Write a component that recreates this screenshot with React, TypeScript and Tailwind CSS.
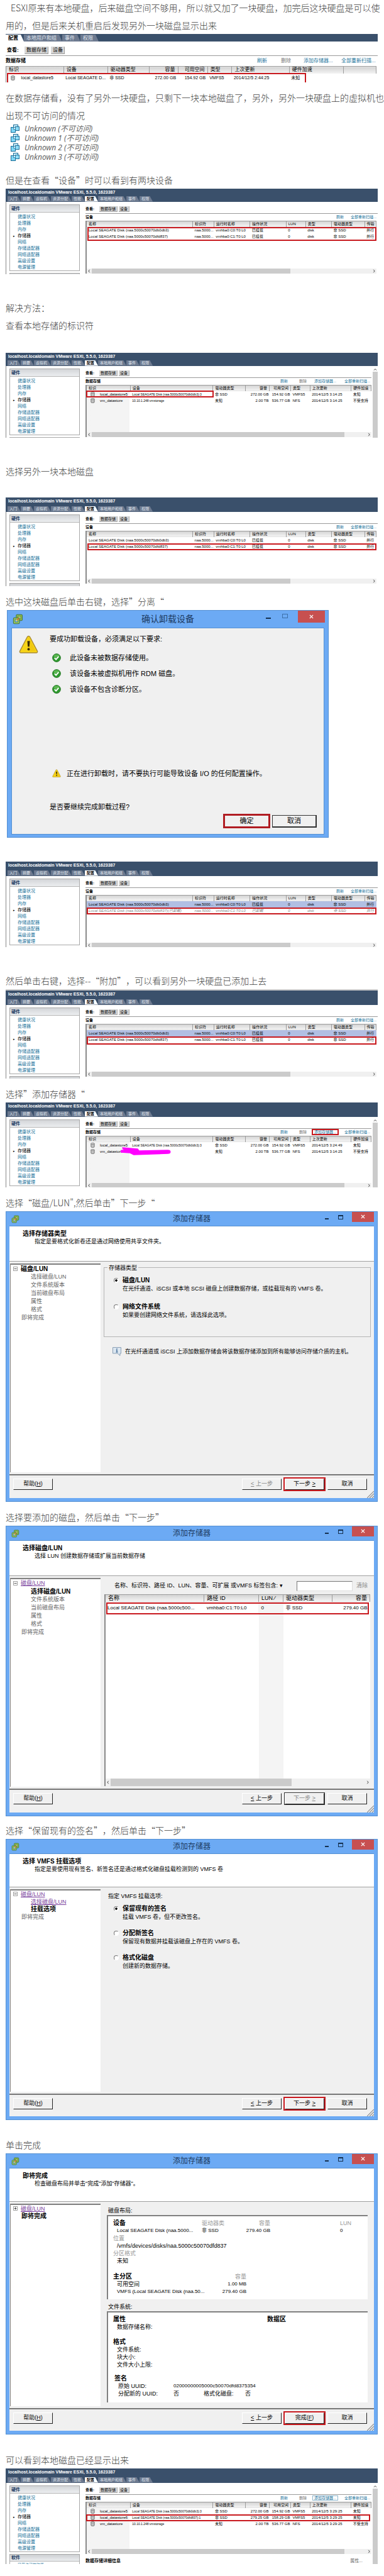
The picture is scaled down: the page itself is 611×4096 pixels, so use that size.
import { useState } from "react";
import type { ReactNode } from "react";

const ALL_TABS = ["入门", "摘要", "虚拟机", "资源分配", "性能", "配置", "本地用户和组", "事件", "权限"];
const NAV = ["健康状况", "处理器", "内存", "存储器", "网络", "存储适配器", "网络适配器", "高级设置", "电源管理"];

/* ---------- icons ---------- */

function VmIcon() {
  return (
    <svg viewBox="0 0 14 13" className="h-[13px] w-[14px] shrink-0" aria-hidden="true">
      <rect x="4.5" y="0.5" width="7" height="7" fill="#c9eefc" stroke="#1b6d97" />
      <rect x="7.5" y="3.5" width="6" height="6" fill="#8fdcf7" stroke="#1b6d97" />
      <rect x="0.5" y="4.5" width="7" height="8" fill="#7fd6f5" stroke="#1b6d97" />
      <rect x="4.5" y="4.5" width="3" height="3" fill="#e8faff" stroke="#1b6d97" strokeWidth="0.7" />
    </svg>
  );
}

function DiskIcon() {
  return (
    <svg viewBox="0 0 8 9" className="mx-auto h-[8px] w-[7px]" aria-hidden="true">
      <path d="M1 1.5v6c0 1.2 6 1.2 6 0v-6" fill="#d5d5d5" stroke="#555" strokeWidth="0.9" />
      <ellipse cx="4" cy="1.6" rx="3" ry="1.1" fill="#f4f4f4" stroke="#555" strokeWidth="0.9" />
      <path d="M3 3.5v4M5.4 3.5v4" stroke="#888" strokeWidth="0.6" />
    </svg>
  );
}

function ClientIcon({ className }: { className: string }) {
  return (
    <svg viewBox="0 0 16 16" className={className} aria-hidden="true">
      <rect x="5.5" y="1.2" width="9" height="9" rx="1.5" fill="#8dbb4d" stroke="#47763a" />
      <rect x="8" y="3.6" width="4.2" height="4" fill="#b9cf7c" stroke="#5c8c3a" strokeWidth="0.8" />
      <rect x="1.3" y="5.8" width="9" height="9" rx="1.5" fill="#9cc862" stroke="#47763a" />
      <rect x="3.6" y="8.2" width="4.4" height="4.2" fill="#6caaf4" stroke="#5c8c3a" strokeWidth="0.8" />
      <path d="M6 10l3.8-3.8" stroke="#d8662d" strokeWidth="1.6" />
      <circle cx="6.2" cy="9.6" r="1.2" fill="#f3d04e" />
    </svg>
  );
}

function WarningIcon({ className }: { className: string }) {
  return (
    <svg viewBox="0 0 32 30" className={className} aria-hidden="true">
      <path d="M16 1.5c1 0 1.700.5 2.200 1.400L30.300 26c.8 1.600 0 3-1.800 3H3.500c-1.800 0-2.600-1.400-1.800-3L13.800 2.900C14.300 2 15 1.500 16 1.500z" fill="#f7d417" stroke="#a98a35" strokeWidth="1.400" />
      <path d="M16 4L27.500 26H16z" fill="#e9bb0c" opacity="0.500" />
      <path d="M13.900 9.500h4.200l-.8 9.500h-2.600z" fill="#3a2c05" />
      <circle cx="16" cy="23" r="2" fill="#3a2c05" />
    </svg>
  );
}

function CheckIcon() {
  return (
    <svg viewBox="0 0 16 16" className="h-[14px] w-[14px] shrink-0" aria-hidden="true">
      <circle cx="8" cy="8" r="7.300" fill="#2f9a2f" stroke="#237323" />
      <ellipse cx="8" cy="4.600" rx="5" ry="3" fill="#7ccb6a" opacity="0.600" />
      <path d="M4.300 8.200l2.700 2.900 4.800-5.500" fill="none" stroke="#fff" strokeWidth="2.100" />
    </svg>
  );
}

function InfoIcon() {
  return (
    <svg viewBox="0 0 14 14" className="h-[14px] w-[14px] shrink-0" aria-hidden="true">
      <path d="M.5.5h13v9.500h-1.500v3.500l-4-3.500H.5z" fill="#dbe6f0" stroke="#8ba0b5" />
      <path d="M7 2v1.400M5.800 4.500H7v3.500M5.500 8h3" stroke="#2f5d8c" strokeWidth="1.200" fill="none" />
    </svg>
  );
}

function Grip() {
  return (
    <svg viewBox="0 0 11 11" className="h-[11px] w-[11px] shrink-0 self-end" aria-hidden="true">
      <path d="M0 11L11 0M4 11l7-7M8 11l3-3" stroke="#8c8c8c" strokeWidth="1.200" />
    </svg>
  );
}

/* ---------- vSphere client panels ---------- */

function Tabs({ names, large }: { names: string[]; large?: boolean }) {
  return (
    <div className={large ? "flex pt-px" : "flex pl-[3px]"} role="tablist">
      {names.map((name) => {
        const active = name === "配置";
        return (
          <button
            key={name}
            type="button"
            role="tab"
            aria-selected={active}
            className={
              (large ? "h-[11px] pr-[9px] pl-[4px] text-[8px] leading-[11px] " : "h-[9px] pr-[6px] pl-[3px] text-[6px] leading-[9px] ") +
              "whitespace-nowrap [clip-path:polygon(0_0,calc(100%-5px)_0,100%_100%,0_100%)] " +
              (active ? "bg-white font-bold text-black" : "bg-[#6d7a90] text-[#dfe4ec]")
            }
          >
            {name}
          </button>
        );
      })}
    </div>
  );
}

function ViewSwitch({ large }: { large?: boolean }) {
  const btn = large
    ? "h-[12px] border border-[#d9d9d9] border-r-[#999] border-b-[#999] bg-[#d6d6d6] px-[2px] text-[8px] leading-[10px] text-black"
    : "h-[9px] border-r border-b border-[#aaa] bg-[#d6d6d6] px-[2px] text-[6px] leading-[8px] text-black";
  return (
    <div
      className={
        large
          ? "flex h-[23px] items-center gap-[4px] border-b border-[#9a9a9a] pt-[6px] pl-[2px]"
          : "flex h-[19px] items-center border-b border-[#9a9a9a] pt-[5px]"
      }
    >
      <span className={large ? "w-[24px] text-[8px] font-bold text-black" : "w-[22px] text-[6px] font-bold text-black"}>查看:</span>
      <button type="button" className={btn}>数据存储</button>
      <button type="button" className={large ? btn : btn + " ml-[2px]"}>设备</button>
    </div>
  );
}

type Cell = { text: ReactNode; right?: boolean; fine?: boolean };

function Grid({
  widths,
  heads,
  rows,
  tall,
  selected,
  ghost,
}: {
  widths: string[];
  heads: Cell[];
  rows: ReactNode[][];
  tall?: boolean;
  selected?: number;
  ghost?: number;
}) {
  return (
    <table className="w-full table-fixed border-collapse text-black">
      <thead>
        <tr>
          {heads.map((h, i) => (
            <th
              key={i}
              scope="col"
              className={
                widths[i] +
                (tall ? " h-[11px] px-[4px] text-[8px] leading-[10px]" : " h-[10px] px-[3px] text-[6px] leading-[8px]") +
                " overflow-hidden border-t border-[#9c9c9c] bg-linear-to-b from-[#d2d2d2] to-[#f5f5f5] py-0 font-normal whitespace-nowrap " +
                (h.text === "标识" ? "" : "border-r ") +
                (h.right ? "text-right" : "text-left")
              }
            >
              {h.text}
            </th>
          ))}
        </tr>
      </thead>
      <tbody>
        {rows.map((r, ri) => (
          <tr
            key={ri}
            className={ri === selected ? "bg-[#b1bfe3]" : ri === ghost ? "text-[#888] italic" : undefined}
          >
            {r.map((c, ci) => (
              <td
                key={ci}
                className={
                  (tall ? "h-[14px] px-[3px] text-[7px] leading-[14px]" : "h-[10px] leading-[10px]") +
                  (tall ? "" : heads[ci].fine ? " px-[3px] text-[5px]" : heads[ci].right ? " px-px text-[6px]" : " px-[3px] text-[6px]") +
                  " py-0 whitespace-nowrap " +
                  (heads[ci].right ? "text-right" : "text-left")
                }
              >
                {c}
              </td>
            ))}
          </tr>
        ))}
      </tbody>
    </table>
  );
}

function HScroll({ thumb, className }: { thumb: string; className: string }) {
  return (
    <div className={"flex items-center bg-[#f0f0f0] text-[#444] " + className} aria-hidden="true">
      <svg viewBox="0 0 8 8" className="h-[6px] w-[8px]"><path d="M5 1L2.500 4 5 7" fill="none" stroke="#444" strokeWidth="1.300" /></svg>
      <div className="h-full flex-1"><div className={"h-full bg-[#cbcbcb] " + thumb} /></div>
      <svg viewBox="0 0 8 8" className="h-[6px] w-[8px]"><path d="M3 1l2.500 3L3 7" fill="none" stroke="#444" strokeWidth="1.300" /></svg>
    </div>
  );
}

function Sidebar({ footer, footerItem }: { footer?: string; footerItem?: string }) {
  return (
    <div className="w-[127px] shrink-0 border-l border-[#888] pt-[4px] pr-[9px] pl-[5px]">
      <div className="border border-[#a8a8a8] bg-white">
        <div className="h-[12px] border-b border-[#b5b5b5] bg-linear-to-b from-[#d3d5d8] to-[#eceef0] pl-[2px] text-[7px] leading-[11px] font-bold text-[#17375e]">
          硬件
        </div>
        <ul className="pt-[2px]">
          {NAV.map((n) => (
            <li key={n} className="flex h-[10px] items-center text-[7px] leading-[10px]">
              <span className="w-[12px] pl-[5px] text-[5px] text-black">{n === "存储器" ? "▸" : ""}</span>
              <a href="#" className={n === "存储器" ? "text-black" : "text-[#23749c]"}>{n}</a>
            </li>
          ))}
        </ul>
      </div>
      <div className="mt-[3px] border border-[#a8a8a8] bg-white">
        <div className="h-[11px] border-b border-[#b5b5b5] bg-linear-to-b from-[#cdcfd2] to-[#eceef0] pl-[2px] text-[7px] leading-[10px] font-bold text-[#17375e]">
          {footer}
        </div>
        {footerItem && <div className="pt-px pl-[12px] text-[6px] leading-[8px] text-[#23749c]">{footerItem}</div>}
      </div>
    </div>
  );
}

function Host({
  barHeight,
  bodyHeight,
  title,
  scroll,
  footer,
  footerItem,
  children,
}: {
  barHeight: string;
  bodyHeight: string;
  title: ReactNode;
  scroll?: boolean;
  footer?: string;
  footerItem?: string;
  children: ReactNode;
}) {
  return (
    <section className="overflow-hidden bg-white">
      <div className={"flex flex-col justify-between bg-[#3a506b] " + barHeight}>
        <div className="pl-[4px] text-[7px] leading-[11px] font-bold text-white">
          localhost.localdomain VMware ESXi, 5.5.0, 1623387
        </div>
        <Tabs names={ALL_TABS} />
      </div>
      <div className={"flex overflow-hidden " + bodyHeight}>
        <Sidebar footer={footer} footerItem={footerItem} />
        <div className="min-w-0 flex-1">
          <ViewSwitch />
          <div className="flex h-[11px] items-center text-[6px] leading-[10px]">{title}</div>
          {children}
        </div>
        {scroll && (
          <div className="ml-[2px] flex w-[8px] shrink-0 flex-col bg-white pt-[3px]" aria-hidden="true">
            <svg viewBox="0 0 8 6" className="h-[5px] w-[8px]"><path d="M1.500 4.500L4 2l2.500 2.500" fill="none" stroke="#444" strokeWidth="1.200" /></svg>
            <div className="mt-px flex-1 bg-[#cbcbcb]" />
          </div>
        )}
      </div>
    </section>
  );
}

const RED = "pointer-events-none absolute border-2 border-[#c8191e] ";

function DeviceTitle() {
  return (
    <>
      <span className="flex-1 font-bold text-black">设备</span>
      <a href="#" className="w-[23px] text-[#23749c]">刷新</a>
      <a href="#" className="w-[43px] whitespace-nowrap text-[#23749c]">全部重新扫描...</a>
    </>
  );
}

const DEVICE_WIDTHS = ["w-[36.6%]", "w-[7.3%]", "w-[12.5%]", "w-[12.5%]", "w-[6.7%]", "w-[9%]", "w-[11.4%]", "w-[4%]"];
const DEVICE_HEADS: Cell[] = ["名称", "标识符", "运行时名称", "操作状况", "LUN", "类型", "驱动器类型", "传输"].map((text) => ({ text }));
const deviceRow = (id: string, port: string, state: string, suffix = "") => [
  `Local SEAGATE Disk (${id})${suffix}`, "naa.5000...", `vmhba0:${port}:T0:L0`, state, "0", "disk", "非 SSD", "并行",
];
const DEV_A = deviceRow("naa.5000c50070db0db3", "C0", "已挂载");
const DEV_B = deviceRow("naa.5000c50070dfd837", "C1", "已挂载");
const DEV_B_OFF = deviceRow("naa.5000c50070dfd837", "C1", "已卸载", "(已卸载)");

function DevicePanel({
  barHeight,
  bodyHeight,
  second,
  selected,
  ghost,
  mark,
}: {
  barHeight: string;
  bodyHeight: string;
  second: string[];
  selected?: number;
  ghost?: number;
  mark: string;
}) {
  return (
    <Host barHeight={barHeight} bodyHeight={bodyHeight} title={<DeviceTitle />}>
      <div className="relative mr-[2px] border-l-2 border-[#8a8a8a]">
        <div className="min-h-[76px]">
          <Grid widths={DEVICE_WIDTHS} heads={DEVICE_HEADS} rows={[DEV_A, second]} selected={selected} ghost={ghost} />
        </div>
        <HScroll thumb="w-[71%]" className="h-[8px]" />
        <div className={RED + mark} />
      </div>
    </Host>
  );
}

function StoreTitle({ boxed }: { boxed?: string }) {
  return (
    <>
      <span className="flex-1 font-bold text-black">数据存储</span>
      <a href="#" className="w-[30px] text-[#23749c]">刷新</a>
      <span className="w-[22px] text-[#777]">删除</span>
      <span className="w-[50px]">
        <a href="#" className={"px-[2px] text-[#23749c] " + (boxed ?? "")}>添加存储器...</a>
      </span>
      <a href="#" className="w-[43px] whitespace-nowrap text-[#23749c]">全部重新扫描...</a>
    </>
  );
}

const STORE_WIDTHS = ["w-[4%]", "w-[11.3%]", "w-[29.1%]", "w-[11.4%]", "w-[8.4%]", "w-[7.5%]", "w-[6.8%]", "w-[14.500%]", "w-[7%]"];
const STORE_HEADS: Cell[] = [
  { text: "标识" },
  { text: "" },
  { text: "设备", fine: true },
  { text: "驱动器类型" },
  { text: "容量", right: true },
  { text: "可用空间", right: true },
  { text: "类型" },
  { text: "上次更新" },
  { text: "硬件加速" },
];

function StorePanel({
  barHeight,
  bodyHeight,
  rows,
  boxed,
  mark,
  scribble,
  details,
  footer,
  footerItem,
}: {
  barHeight: string;
  bodyHeight: string;
  rows: ReactNode[][];
  boxed?: string;
  mark?: string;
  scribble?: boolean;
  details?: boolean;
  footer?: string;
  footerItem?: string;
}) {
  return (
    <Host barHeight={barHeight} bodyHeight={bodyHeight} title={<StoreTitle boxed={boxed} />} scroll footer={footer} footerItem={footerItem}>
      <div className="relative border-l-2 border-[#8a8a8a]">
        <div className="min-h-[75px] bg-linear-to-r from-[#f4f4f4] from-15% to-white to-15%">
          <Grid widths={STORE_WIDTHS} heads={STORE_HEADS} rows={rows} />
        </div>
        <HScroll thumb="w-[92%]" className="h-[8px]" />
        {mark && <div className={RED + mark} />}
        {scribble && (
          <svg viewBox="0 0 80 14" className="absolute top-[17px] left-[54px] h-[14px] w-[80px]" aria-hidden="true">
            <path d="M3 2l24 2 2 3 46-1c5 0 5 5 0 5l-26 1-28 1-6-3-14-1c-3-1-2-3 2-3h9L4 4z" fill="#f0f" stroke="#f0f" strokeWidth="1.500" strokeLinejoin="round" />
          </svg>
        )}
      </div>
      {details && (
        <div className="flex justify-between pt-[6px] pr-[14px] text-[7px] leading-[10px]">
          <span className="font-bold text-black">数据存储详细信息</span>
          <a href="#" className="text-[#666]">属性...</a>
        </div>
      )}
    </Host>
  );
}

const storeRow = (...cells: ReactNode[]) => [<DiskIcon key="icon" />, ...cells];

function DatastoreStrip() {
  const link = "text-[#23749c] whitespace-nowrap";
  return (
    <section>
      <div className="h-[12px] bg-[#3a506b]">
        <Tabs names={["配置", "本地用户和组", "事件", "权限"]} large />
      </div>
      <ViewSwitch large />
      <div className="flex h-[16px] items-center text-[8px] leading-[12px]">
        <span className="flex-1 font-bold text-black">数据存储</span>
        <a href="#" className={link + " w-[38px]"}>刷新</a>
        <span className="w-[36px] text-[#777]">删除</span>
        <a href="#" className={link + " w-[60px]"}>添加存储器...</a>
        <a href="#" className={link + " w-[58px]"}>全部重新扫描...</a>
      </div>
      <div className="relative mr-[2px] border-l border-[#8a8a8a]">
        <Grid
          tall
          widths={["w-[3.500%]", "w-[12%]", "w-[11.900%]", "w-[11.300%]", "w-[7.700%]", "w-[8%]", "w-[6.600%]", "w-[15.500%]", "w-[14.700%]", "w-[8.800%]"]}
          heads={[
            { text: "标识" },
            { text: "" },
            { text: "设备" },
            { text: "驱动器类型" },
            { text: "容量", right: true },
            { text: "可用空间", right: true },
            { text: "类型" },
            { text: "上次更新" },
            { text: "硬件加速" },
            { text: "" },
          ]}
          rows={[storeRow("local_datastore5", "Local SEAGATE D...", "非 SSD", "272.00 GB", "154.92 GB", "VMFS5", "2014/12/5 2:44:25", "未知", "")]}
        />
        <div className="pointer-events-none absolute top-[11px] bottom-0 left-px w-[476px] border-2 border-b-0 border-[#c8191e]" />
      </div>
    </section>
  );
}

/* ---------- dialogs ---------- */

function TitleBar({ title, big }: { title: string; big?: boolean }) {
  return (
    <div className={"grid grid-cols-[1fr_auto_1fr] " + (big ? "h-[27px]" : "h-[22px]")}>
      <ClientIcon className={big ? "mt-[5px] ml-[8px] h-[17px] w-[17px]" : "mt-[5px] ml-[8px] h-[13px] w-[13px]"} />
      <span className={"text-[#1c3a61] " + (big ? "text-[14px] leading-[27px]" : "text-[12px] leading-[23px]")}>{title}</span>
      <div className="flex justify-end">
        <button type="button" aria-label="最小化" className={"flex items-start justify-center " + (big ? "w-[26px] pt-[11px]" : "w-[22px] pt-[10px]")}>
          <span className={"h-[2px] bg-[#14304f] " + (big ? "w-[8px]" : "w-[6px]")} />
        </button>
        <button type="button" aria-label="最大化" className={"flex items-start justify-center pt-[5px] " + (big ? "w-[26px]" : "w-[21px]")}>
          <span className={big ? "h-[7px] w-[9px] border border-[#3c6fa8]" : "h-[7px] w-[8px] border border-t-2 border-[#14304f]"} />
        </button>
        <button
          type="button"
          aria-label="关闭"
          className={"mr-[5px] ml-[8px] flex items-center justify-center bg-[#c75050] " + (big ? "h-[19px] w-[43px]" : "h-[16px] w-[35px]")}
        >
          <svg viewBox="0 0 8 8" className="h-[7px] w-[7px]" aria-hidden="true">
            <path d="M1 1l6 6M7 1L1 7" stroke="#fff" strokeWidth="1.500" />
          </svg>
        </button>
      </div>
    </div>
  );
}

function WizardButton({ children, off, marked, focus }: { children: ReactNode; off?: boolean; marked?: boolean; focus?: boolean }) {
  return (
    <button
      type="button"
      disabled={off}
      className={
        "h-[18px] w-[63px] border border-t-white border-l-white border-r-[#222] border-b-[#222] bg-[#f0f0f0] text-[9px] leading-[15px] " +
        (off ? "text-[#888] " : "text-black ") +
        (marked ? "outline-2 outline-[#c8191e] " : "") +
        (focus ? "outline-1 outline-[#333]" : "")
      }
    >
      {children}
    </button>
  );
}

function Wizard({
  heading,
  sub,
  short,
  nav,
  next,
  nextState,
  backOff,
  children,
}: {
  heading: string;
  sub: string;
  short?: boolean;
  nav: ReactNode;
  next: ReactNode;
  nextState: "marked" | "focus";
  backOff?: boolean;
  children: ReactNode;
}) {
  return (
    <section className="border border-[#5590d2] bg-[#6caaf4]">
      <TitleBar title="添加存储器" />
      <div className="mx-[5px] mb-[5px] bg-[#f0f0f0]">
        <header className={"border-t border-b border-t-[#5590d2] border-b-[#a0a0a0] bg-white pt-[6px] pl-[21px] " + (short ? "h-[54px]" : "h-[57px]")}>
          <h2 className="text-[10px] leading-[12px] font-bold text-black">{heading}</h2>
          <p className="pl-[19px] text-[9px] leading-[13px] text-black">{sub}</p>
        </header>
        <div className={"flex py-[3px] pl-px " + (short ? "min-h-[328px]" : "min-h-[338px]")}>
          <nav className={"w-[144px] shrink-0 border-t-2 border-l border-[#808080] bg-white text-[9px] text-[#666] " + (short ? "leading-[12px]" : "leading-[13px]")}>
            {nav}
          </nav>
          <div className="min-w-0 flex-1 text-[9px] text-black">{children}</div>
        </div>
        <footer className={"flex border-t-2 border-[#777] pt-[5px] pl-[6px] " + (short ? "h-[36px]" : "h-[38px]")}>
          <WizardButton>
            帮助(<u>H</u>)
          </WizardButton>
          <div className="flex flex-1 justify-end gap-[5px]">
            <WizardButton off={backOff}>
              <u>&lt;</u> 上一步
            </WizardButton>
            <WizardButton marked={nextState === "marked"} focus={nextState === "focus"} off={nextState === "focus"}>
              {next}
            </WizardButton>
            <WizardButton>取消</WizardButton>
          </div>
          <Grip />
        </footer>
      </div>
    </section>
  );
}

function TreeRoot({ children, open = true }: { children: ReactNode; open?: boolean }) {
  return (
    <div className="flex items-center gap-[5px] pl-[4px]">
      <svg viewBox="0 0 9 9" className="h-[7px] w-[7px]" aria-hidden="true">
        <path d="M.5.5h8v8h-8z" fill="#fff" stroke="#777" />
        <path d={open ? "M2 4.500h5" : "M2 4.500h5M4.500 2v5"} stroke="#222" />
      </svg>
      {children}
    </div>
  );
}

const VISITED = "text-[#7a3f9d] underline";
const CURRENT = "text-[10px] font-bold text-black";

function Option({ group, label, desc, checked, onPick, className }: { group: string; label: string; desc: string; checked: boolean; onPick: () => void; className: string }) {
  return (
    <div className={className}>
      <label className="flex h-[12px] items-center gap-[6px] text-[10px] leading-[12px] font-bold">
        <input
          type="radio"
          name={group}
          checked={checked}
          onChange={onPick}
          className="h-[8px] w-[8px] appearance-none rounded-full border border-t-[#777] border-r-white border-b-white border-l-[#777] bg-white checked:bg-[radial-gradient(#000_35%,#fff_45%)]"
        />
        {label}
      </label>
      <p className="pl-[14px] leading-[14px] whitespace-nowrap">{desc}</p>
    </div>
  );
}

function StorageTypeWizard() {
  const [kind, setKind] = useState(0);
  return (
    <Wizard
      heading="选择存储器类型"
      sub="指定是要格式化新卷还是通过网络使用共享文件夹。"
      backOff
      nextState="marked"
      next={<>下一步 <u>&gt;</u></>}
      nav={
        <>
          <TreeRoot><span className={CURRENT}>磁盘/LUN</span></TreeRoot>
          <div className="pl-[32px]">
            <div>选择磁盘/LUN</div>
            <div>文件系统版本</div>
            <div>当前磁盘布局</div>
            <div>属性</div>
            <div>格式</div>
          </div>
          <div className="pl-[17px]">即将完成</div>
        </>
      }
    >
      <fieldset className="mx-[5px] mt-px border border-[#b4b4b4] pb-[27px] pl-[15px]">
        <legend className="-ml-[10px] px-[2px] leading-[12px]">存储器类型</legend>
        <Option className="pt-[8px]" group="kind" label="磁盘/LUN" desc="在光纤通道、iSCSI 或本地 SCSI 磁盘上创建数据存储，或挂载现有的 VMFS 卷。" checked={kind === 0} onPick={() => setKind(0)} />
        <Option className="pt-[16px]" group="kind" label="网络文件系统" desc="如果要创建网络文件系统，请选择此选项。" checked={kind === 1} onPick={() => setKind(1)} />
      </fieldset>
      <div className="mt-[16px] flex items-center gap-[6px] pl-[19px] leading-[14px] whitespace-nowrap">
        <InfoIcon />
        在光纤通道或 iSCSI 上添加数据存储会将该数据存储添加到所有能够访问存储介质的主机。
      </div>
    </Wizard>
  );
}

function LunWizard() {
  const head = "border-t border-r border-[#9c9c9c] bg-linear-to-b from-[#d2d2d2] to-[#f5f5f5] px-[4px] py-0 leading-[11px] font-normal";
  return (
    <Wizard
      heading="选择磁盘/LUN"
      sub="选择 LUN 创建数据存储或扩展当前数据存储"
      nextState="focus"
      next={<>下一步 <u>&gt;</u></>}
      nav={
        <>
          <TreeRoot><a href="#" className={VISITED}>磁盘/LUN</a></TreeRoot>
          <div className="pl-[32px]">
            <div className={CURRENT}>选择磁盘/LUN</div>
            <div>文件系统版本</div>
            <div>当前磁盘布局</div>
            <div>属性</div>
            <div>格式</div>
          </div>
          <div className="pl-[17px]">即将完成</div>
        </>
      }
    >
      <div className="flex h-[26px] items-center pr-[10px] pl-[22px] whitespace-nowrap">
        <label htmlFor="lun-filter" className="flex-1">名称、标识符、路径 ID、LUN、容量、可扩展 或VMFS 标签包含: ▾</label>
        <input id="lun-filter" type="text" className="h-[16px] w-[89px] border border-t-[#777] border-r-[#ddd] border-b-[#ddd] border-l-[#777] bg-white px-[2px]" />
        <button type="button" className="ml-[6px] text-[#888]">清除</button>
      </div>
      <div className="relative mr-[6px] ml-[6px] border-l-2 border-[#8a8a8a] bg-white">
        <div className="flex min-h-[293px] flex-col">
          <table className="w-full table-fixed border-collapse">
            <thead>
              <tr className="text-left">
                <th scope="col" className={head + " w-[37.300%]"}>名称</th>
                <th scope="col" className={head + " w-[20.600%]"}>路径 ID</th>
                <th scope="col" className={head + " w-[9.300%]"}>LUN ⁄</th>
                <th scope="col" className={head + " w-[18.600%]"}>驱动器类型</th>
                <th scope="col" className={head + " text-right"}>容量</th>
              </tr>
            </thead>
            <tbody>
              <tr className="h-[20px] text-[8px] whitespace-nowrap">
                <td className="px-[3px] py-0">Local SEAGATE Disk (naa.5000c500...</td>
                <td className="px-[4px] py-0">vmhba0:C1:T0:L0</td>
                <td className="bg-[#f4f4f4] px-[4px] py-0">0</td>
                <td className="px-[4px] py-0">非 SSD</td>
                <td className="px-[4px] py-0 text-right">279.40 GB</td>
              </tr>
            </tbody>
          </table>
          <div className="ml-[57.900%] w-[9.300%] flex-1 bg-[#f4f4f4]" />
        </div>
        <HScroll thumb="w-[71%]" className="h-[12px]" />
        <div className={RED + "top-[13px] right-[2px] left-px h-[19px]"} />
      </div>
    </Wizard>
  );
}

function MountWizard() {
  const [mode, setMode] = useState(0);
  const options = [
    ["保留现有的签名", "挂载 VMFS 卷，但不更改签名。"],
    ["分配新签名", "保留现有数据并挂载该磁盘上存在的 VMFS 卷。"],
    ["格式化磁盘", "创建新的数据存储。"],
  ];
  return (
    <Wizard
      short
      heading="选择 VMFS 挂载选项"
      sub="指定是要使用现有签名、新签名还是通过格式化磁盘挂载检测到的 VMFS 卷"
      nextState="marked"
      next={<>下一步 <u>&gt;</u></>}
      nav={
        <>
          <TreeRoot><a href="#" className={VISITED}>磁盘/LUN</a></TreeRoot>
          <div className="pl-[32px]">
            <a href="#" className={VISITED + " block"}>选择磁盘/LUN</a>
            <div className={CURRENT}>挂载选项</div>
          </div>
          <div className="pl-[17px]">即将完成</div>
        </>
      }
    >
      <div className="pt-[5px] pl-[12px] leading-[12px]">指定 VMFS 挂载选项:</div>
      <div className="-mt-[5px] pl-[21px]">
        {options.map(([label, desc], i) => (
          <Option key={label} className="pt-[13px]" group="mount" label={label} desc={desc} checked={mode === i} onPick={() => setMode(i)} />
        ))}
      </div>
    </Wizard>
  );
}

function FinishWizard() {
  const box = "mr-[10px] ml-[10px] border-t-2 border-l-2 border-[#808080] bg-white pl-[8px] leading-[12px] whitespace-nowrap";
  const strong = "text-[10px] font-bold";
  return (
    <Wizard
      short
      heading="即将完成"
      sub={'检查磁盘布局并单击"完成"添加"存储器"。'}
      nextState="marked"
      next={<>完成(<u>F</u>)</>}
      nav={
        <>
          <TreeRoot open={false}><a href="#" className={VISITED}>磁盘/LUN</a></TreeRoot>
          <div className={"pl-[17px] " + CURRENT}>即将完成</div>
        </>
      }
    >
      <div className="pt-[5px] pl-[12px] leading-[12px]">磁盘布局:</div>
      <div className={box + " mt-px h-[134px] pt-[5px]"}>
        <div className="grid grid-cols-[141px_60px_49px_1fr_44px] text-[#999]">
          <span className={strong + " text-black"}>设备</span>
          <span>驱动器类</span>
          <span className="text-right">容量</span>
          <span />
          <span>LUN</span>
        </div>
        <div className="grid h-[12px] grid-cols-[141px_60px_49px_1fr_44px] text-[8px]">
          <span className="pl-[6px]">Local SEAGATE Disk (naa.5000...</span>
          <span>非 SSD</span>
          <span className="text-right">279.40 GB</span>
          <span />
          <span>0</span>
        </div>
        <div className="text-[#999]">位置</div>
        <div className="pl-[6px]">/vmfs/devices/disks/naa.5000c50070dfd837</div>
        <div className="text-[#999]">分区格式</div>
        <div className="pl-[6px]">未知</div>
        <div className="mt-[13px] grid grid-cols-[160px_52px]">
          <span className={strong}>主分区</span>
          <span className="text-right text-[#999]">容量</span>
          <span className="pl-[6px]">可用空间</span>
          <span className="text-right text-[8px]">1.00 MB</span>
          <span className="pl-[6px] text-[8px]">VMFS (Local SEAGATE Disk (naa.50...</span>
          <span className="text-right text-[8px]">279.40 GB</span>
        </div>
      </div>
      <div className="pt-[6px] pl-[12px] leading-[12px]">文件系统:</div>
      <div className={box + " mt-px h-[145px] pt-[5px]"}>
        <div className={"grid grid-cols-[245px_1fr] " + strong}>
          <span>属性</span>
          <span>数据区</span>
        </div>
        <div className="pl-[6px]">数据存储名称:</div>
        <div className={"mt-[12px] " + strong}>格式</div>
        <div className="pl-[6px]">文件系统:</div>
        <div className="pl-[6px]">块大小:</div>
        <div className="pl-[6px]">文件大小上限:</div>
        <div className={"mt-[10px] pl-[2px] " + strong}>签名</div>
        <div className="grid grid-cols-[88px_48px_66px_1fr] pl-[8px]">
          <span>原始 UUID:</span>
          <span className="col-span-3 text-[8px]">02000000005000c50070dfd8375354</span>
          <span>分配新的 UUID:</span>
          <span>否</span>
          <span>格式化磁盘:</span>
          <span>否</span>
        </div>
      </div>
    </Wizard>
  );
}

function DetachDialog() {
  return (
    <section className="ml-[2px] w-[512px] max-w-full border border-[#5590d2] bg-[#6caaf4]">
      <TitleBar title="确认卸载设备" big />
      <div className="mx-[6px] mb-[4px] flex h-[329px] border border-[#5590d2] bg-[#f0f0f0] text-[11px] text-black">
        <WarningIcon className="mt-[11px] ml-[11px] h-[29px] w-[31px] shrink-0" />
        <div className="min-w-0 flex-1 pt-[7px] pr-[11px] pl-[18px]">
          <p className="leading-[20px]">要成功卸载设备，必须满足以下要求:</p>
          <ul className="mt-[8px] pl-[4px]">
            {["此设备未被数据存储使用。", "该设备未被虚拟机用作 RDM 磁盘。", "该设备不包含诊断分区。"].map((t) => (
              <li key={t} className="flex h-[25px] items-center gap-[14px]">
                <CheckIcon />
                {t}
              </li>
            ))}
          </ul>
          <p className="mt-[113px] flex items-center gap-[9px] pl-[4px] leading-[16px] whitespace-nowrap">
            <WarningIcon className="h-[13px] w-[14px] shrink-0" />
            正在进行卸载时，请不要执行可能导致设备 I/O 的任何配置操作。
          </p>
          <p className="mt-[37px] leading-[16px]">是否要继续完成卸载过程?</p>
          <div className="mt-[3px] flex justify-end gap-[3px]">
            <button type="button" className="h-[23px] w-[75px] border-[3px] border-[#b01c22] bg-[#f0f0f0]">确定</button>
            <button type="button" className="mt-[2px] h-[20px] w-[71px] border border-r-2 border-b-2 border-[#333]">取消</button>
          </div>
        </div>
      </div>
    </section>
  );
}

/* ---------- article ---------- */

function Text({ className, children }: { className: string; children: ReactNode }) {
  return (
    <p className={"text-[14px] leading-[28px] font-light whitespace-pre text-[#444] [font-family:'Noto_Sans_CJK_SC',sans-serif] [text-spacing-trim:space-all] " + className}>
      {children}
    </p>
  );
}

export default function App() {
  return (
    <main lang="zh-CN" className="overflow-hidden bg-white pr-[10px] pb-[20px] pl-[9px] [font-family:'Liberation_Sans','Noto_Sans_CJK_SC',sans-serif]">
      <Text className="-mt-[2px]">
        <span className="pl-[8px]">ESXI原来有本地硬盘，后来磁盘空间不够用，所以就又加了一块硬盘，加完后这块硬盘是可以使</span>
        <br />
        用的，但是后来关机重启后发现另外一块磁盘显示出来
      </Text>
      <DatastoreStrip />

      <Text className="mt-[10px]">
        在数据存储看，没有了另外一块硬盘，只剩下一块本地磁盘了，另外，另外一块硬盘上的虚拟机也
        <br />
        出现不可访问的情况
      </Text>
      <ul className="pl-[8px] text-[12px] leading-[15px] text-[#666] italic [font-family:'Noto_Sans','Noto_Sans_CJK_SC',sans-serif]">
        {["Unknown (不可访问)", "Unknown 1 (不可访问)", "Unknown 2 (不可访问)", "Unknown 3 (不可访问)"].map((name) => (
          <li key={name} className="flex h-[15px] items-center gap-[8px]">
            <VmIcon />
            {name}
          </li>
        ))}
      </ul>

      <Text className="mt-[15px]">但是在查看“设备”时可以看到有两块设备</Text>
      <DevicePanel barHeight="h-[21px]" bodyHeight="h-[115px]" second={DEV_B} mark="top-[10px] right-0 left-px h-[22px]" />

      <Text className="mt-[39px]">
        解决方法：
        <br />
        查看本地存储的标识符
      </Text>
      <div className="mt-[30px]">
        <StorePanel
          barHeight="h-[21px]"
          bodyHeight="h-[114px]"
          mark="top-[9px] -left-px w-[203px] h-[11px]"
          rows={[
            storeRow("local_datastore5", "Local SEAGATE Disk (naa.5000c50070db0db3):3", "非 SSD", "272.00 GB", "154.92 GB", "VMFS5", "2014/12/5 3:14:25", "未知"),
            storeRow("vm_datastore", "10.10.1.248:vmstorage", "未知", "2.00 TB", "536.77 GB", "NFS", "2014/12/5 3:14:25", "不受支持"),
          ]}
        />
      </div>

      <Text className="mt-[39px]">选择另外一块本地磁盘</Text>
      <div className="mt-[28px]">
        <DevicePanel barHeight="h-[23px]" bodyHeight="h-[118px]" second={DEV_B} mark="top-[20px] right-0 left-px h-[11px]" />
      </div>

      <Text className="mt-[10px]">选中这块磁盘后单击右键，选择”分离“</Text>
      <DetachDialog />

      <div className="mt-[38px]">
        <DevicePanel barHeight="h-[23px]" bodyHeight="h-[113px]" second={DEV_B_OFF} selected={0} ghost={1} mark="top-[20px] right-0 left-0 h-[11px]" />
      </div>

      <Text className="mt-[39px]">然后单击右键，选择--“附加”，可以看到另外一块硬盘已添加上去</Text>
      <div className="border-t-2 border-[#c9c9c9]">
        <DevicePanel barHeight="h-[23px]" bodyHeight="h-[117px]" second={DEV_B} selected={0} mark="top-[20px] right-0 left-0 h-[13px]" />
      </div>

      <Text className="mt-[10px]">选择”添加存储器“</Text>
      <StorePanel
        barHeight="h-[23px]"
        bodyHeight="h-[112px]"
        boxed="outline-2 outline-[#c8191e]"
        scribble
        rows={[
          storeRow("local_datastore5", "Local SEAGATE Disk (naa.5000c50070db0db3):3", "非 SSD", "272.00 GB", "154.92 GB", "VMFS5", "2014/12/5 3:24:49", "未知"),
          storeRow("vm_datastore", "", "未知", "2.00 TB", "536.77 GB", "NFS", "2014/12/5 3:14:25", "不受支持"),
        ]}
      />

      <Text className="mt-[10px]">选择“磁盘/LUN",然后单击”下一步“</Text>
      <StorageTypeWizard />

      <Text className="mt-[10px]">选择要添加的磁盘，然后单击“下一步”</Text>
      <LunWizard />

      <Text className="mt-[8px]">选择“保留现有的签名”，然后单击“下一步”</Text>
      <MountWizard />

      <Text className="mt-[25px]">单击完成</Text>
      <FinishWizard />

      <Text className="mt-[26px]">可以看到本地磁盘已经显示出来</Text>
      <StorePanel
        barHeight="h-[23px]"
        bodyHeight="h-[129px]"
        boxed="outline-1 outline-[#8fb6cc]"
        mark="top-[20px] right-[2px] -left-px h-[11px]"
        details
        footer="软件"
        footerItem="已获许可的功能"
        rows={[
          storeRow("local_datastore5", "Local SEAGATE Disk (naa.5000c50070db0db3):3", "非 SSD", "272.00 GB", "154.92 GB", "VMFS5", "2014/12/5 3:29:25", "未知"),
          storeRow("local_datastore6", "Local SEAGATE Disk (naa.5000c50070dfd837):1", "非 SSD", "279.25 GB", "158.29 GB", "VMFS5", "2014/12/5 3:29:25", "未知"),
          storeRow("vm_datastore", "10.10.1.248:vmstorage", "未知", "2.00 TB", "536.77 GB", "NFS", "2014/12/5 3:29:25", "不受支持"),
        ]}
      />
    </main>
  );
}
